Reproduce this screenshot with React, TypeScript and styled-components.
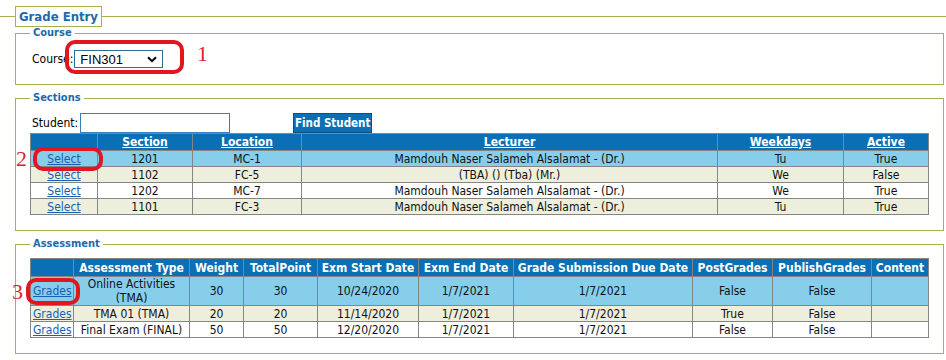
import styled, { createGlobalStyle } from 'styled-components'

const FONT = `"DejaVu Sans Condensed", "DejaVu Sans", Verdana, sans-serif`

const GlobalStyle = createGlobalStyle`
  html, body {
    margin: 0;
    padding: 0;
    background: #ffffff;
  }
  body {
    font-family: ${FONT};
    font-size: 12px;
    color: #000000;
  }
`

const Page = styled.div`
  position: relative;
  width: 946px;
  height: 360px;
  overflow: hidden;
  padding-top: 6px;
  box-sizing: border-box;
`

const OuterSet = styled.fieldset`
  margin: 0;
  padding: 0 2px 0 15px;
  border: none;
  border-top: 1px solid #aab050;
  min-width: 0;
`

const OuterLegend = styled.legend`
  margin: 0;
  padding: 0 3px;
  border: 1px solid #aab050;
  line-height: 19px;
  font-size: 13px;
  font-weight: bold;
  color: #1c6aac;
`

const Group = styled.fieldset<{ $top: number; $bottom: number }>`
  margin: 0;
  & + & {
    margin-top: 7px;
  }
  padding: ${(p) => p.$top}px 14px ${(p) => p.$bottom}px 14px;
  border: 1px solid #aab050;
  min-width: 0;
`

const GroupLegend = styled.legend`
  margin: 0;
  padding: 0 3px;
  line-height: 12px;
  font-size: 11px;
  font-weight: bold;
  color: #1c6aac;
`

const FormRow = styled.div`
  display: flex;
  align-items: center;
  height: 20px;
`

const Label = styled.label`
  padding-left: 2px;
  font-size: 12px;
`

const SelectWrap = styled.span`
  position: relative;
  display: inline-block;
  margin-left: 1px;
`

const Select = styled.select`
  appearance: none;
  width: 89px;
  height: 18px;
  margin: 0;
  padding: 0 0 0 5px;
  border: 1px solid #2a6d96;
  border-radius: 0;
  background: #ffffff;
  font-family: "Liberation Sans", Arial, sans-serif;
  font-size: 13px;
  color: #000000;
`

const Chevron = styled.svg`
  position: absolute;
  right: 6px;
  top: 6px;
  pointer-events: none;
`

const TextInput = styled.input`
  width: 150px;
  height: 20px;
  margin: 0 0 0 2px;
  padding: 0 3px;
  box-sizing: border-box;
  border: 1px solid #3a7fbf;
  font-family: ${FONT};
  font-size: 12px;
`

const FindButton = styled.button`
  margin-left: 63px;
  width: 79px;
  height: 20px;
  padding: 0;
  box-sizing: border-box;
  border: 1px solid #134f7c;
  background: #0a6fb5;
  color: #ffffff;
  font-family: ${FONT};
  font-size: 11.5px;
  font-weight: bold;
  white-space: nowrap;
  overflow: hidden;
`

const Grid = styled.table`
  width: 898px;
  table-layout: fixed;
  border-collapse: collapse;
  border: 1px solid #858585;
`

const Head = styled.th<{ $h: number }>`
  height: ${(p) => p.$h}px;
  padding: 0 2px;
  border: 1px solid #858585;
  background: #0a6fb5;
  color: #ffffff;
  font-weight: bold;
  font-size: 12px;
  text-align: center;
  white-space: nowrap;
`

const HeadLink = styled.a`
  color: #ffffff;
  text-decoration: underline;
`

const Row = styled.tr<{ $tone: 'sel' | 'alt' | 'plain' }>`
  background: ${(p) =>
    p.$tone === 'sel' ? '#87ceeb' : p.$tone === 'alt' ? '#eeeedd' : '#ffffff'};
`

const Cell = styled.td<{ $h?: number }>`
  height: ${(p) => p.$h ?? 15}px;
  padding: 0 2px;
  border: 1px solid #858585;
  text-align: center;
  line-height: 14px;
  font-size: 12px;
  color: #111111;
`

const CellLink = styled.a`
  color: #1a5fb0;
  text-decoration: underline;
`

const Mark = styled.div<{ $x: number; $y: number; $w: number; $h: number }>`
  position: absolute;
  left: ${(p) => p.$x}px;
  top: ${(p) => p.$y}px;
  width: ${(p) => p.$w}px;
  height: ${(p) => p.$h}px;
  box-sizing: border-box;
  border: 4px solid #e3151f;
  border-radius: 10px;
  pointer-events: none;
`

const Numeral = styled.span<{ $x: number; $y: number }>`
  position: absolute;
  left: ${(p) => p.$x}px;
  top: ${(p) => p.$y}px;
  font-family: "Liberation Serif", "Times New Roman", serif;
  font-size: 22px;
  line-height: 22px;
  color: #d91f2b;
`

const sections = [
  { section: '1201', location: 'MC-1', lecturer: 'Mamdouh Naser Salameh Alsalamat - (Dr.)', days: 'Tu', active: 'True' },
  { section: '1102', location: 'FC-5', lecturer: '(TBA) () (Tba) (Mr.)', days: 'We', active: 'False' },
  { section: '1202', location: 'MC-7', lecturer: 'Mamdouh Naser Salameh Alsalamat - (Dr.)', days: 'We', active: 'True' },
  { section: '1101', location: 'FC-3', lecturer: 'Mamdouh Naser Salameh Alsalamat - (Dr.)', days: 'Tu', active: 'True' },
]

const assessments = [
  { type: 'Online Activities (TMA)', weight: 30, total: 30, start: '10/24/2020', end: '1/7/2021', due: '1/7/2021', post: 'False', publish: 'False' },
  { type: 'TMA 01 (TMA)', weight: 20, total: 20, start: '11/14/2020', end: '1/7/2021', due: '1/7/2021', post: 'True', publish: 'False' },
  { type: 'Final Exam (FINAL)', weight: 50, total: 50, start: '12/20/2020', end: '1/7/2021', due: '1/7/2021', post: 'False', publish: 'False' },
]

const sectionCols = [67, 95, 109, 416, 126, 85]
const assessCols = [43, 116, 54, 74, 101, 95, 179, 80, 99, 57]
const tones: Array<'sel' | 'alt' | 'plain'> = ['sel', 'alt', 'plain', 'alt']

const App = () => {
  return (
    <Page>
      <GlobalStyle />
      <OuterSet>
        <OuterLegend>Grade Entry</OuterLegend>

        <Group $top={10} $bottom={15}>
          <GroupLegend>Course</GroupLegend>
          <FormRow>
            <Label>Course:</Label>
            <SelectWrap>
              <Select defaultValue="FIN301">
                <option>FIN301</option>
              </Select>
              <Chevron width="10" height="7" viewBox="0 0 10 7">
                <path d="M1 1.2 L5 5.2 L9 1.2" fill="none" stroke="#000" strokeWidth="2" />
              </Chevron>
            </SelectWrap>
          </FormRow>
        </Group>

        <Group $top={9} $bottom={15}>
          <GroupLegend>Sections</GroupLegend>
          <FormRow>
            <Label>Student:</Label>
            <TextInput type="text" />
            <FindButton type="button">Find Student</FindButton>
          </FormRow>
          <Grid>
            <colgroup>
              {sectionCols.map((w, i) => (
                <col key={i} style={{ width: w }} />
              ))}
            </colgroup>
            <thead>
              <tr>
                <Head $h={16}>&nbsp;</Head>
                <Head $h={16}><HeadLink>Section</HeadLink></Head>
                <Head $h={16}><HeadLink>Location</HeadLink></Head>
                <Head $h={16}><HeadLink>Lecturer</HeadLink></Head>
                <Head $h={16}><HeadLink>Weekdays</HeadLink></Head>
                <Head $h={16}><HeadLink>Active</HeadLink></Head>
              </tr>
            </thead>
            <tbody>
              {sections.map((s, i) => (
                <Row key={s.section} $tone={tones[i]}>
                  <Cell><CellLink>Select</CellLink></Cell>
                  <Cell>{s.section}</Cell>
                  <Cell>{s.location}</Cell>
                  <Cell>{s.lecturer}</Cell>
                  <Cell>{s.days}</Cell>
                  <Cell>{s.active}</Cell>
                </Row>
              ))}
            </tbody>
          </Grid>
        </Group>

        <Group $top={8} $bottom={15}>
          <GroupLegend>Assessment</GroupLegend>
          <Grid>
            <colgroup>
              {assessCols.map((w, i) => (
                <col key={i} style={{ width: w }} />
              ))}
            </colgroup>
            <thead>
              <tr>
                <Head $h={17}>&nbsp;</Head>
                <Head $h={17}>Assessment Type</Head>
                <Head $h={17}>Weight</Head>
                <Head $h={17}>TotalPoint</Head>
                <Head $h={17}>Exm Start Date</Head>
                <Head $h={17}>Exm End Date</Head>
                <Head $h={17}>Grade Submission Due Date</Head>
                <Head $h={17}>PostGrades</Head>
                <Head $h={17}>PublishGrades</Head>
                <Head $h={17}>Content</Head>
              </tr>
            </thead>
            <tbody>
              {assessments.map((a, i) => (
                <Row key={a.type} $tone={tones[i]}>
                  <Cell $h={i === 0 ? 28 : 15}><CellLink>Grades</CellLink></Cell>
                  <Cell>{a.type}</Cell>
                  <Cell>{a.weight}</Cell>
                  <Cell>{a.total}</Cell>
                  <Cell>{a.start}</Cell>
                  <Cell>{a.end}</Cell>
                  <Cell>{a.due}</Cell>
                  <Cell>{a.post}</Cell>
                  <Cell>{a.publish}</Cell>
                  <Cell></Cell>
                </Row>
              ))}
            </tbody>
          </Grid>
        </Group>
      </OuterSet>

      <Mark $x={65} $y={40} $w={119} $h={34} />
      <Numeral $x={197} $y={43}>1</Numeral>
      <Mark $x={33} $y={147} $w={70} $h={24} />
      <Numeral $x={16} $y={148}>2</Numeral>
      <Mark $x={26} $y={278} $w={54} $h={27} />
      <Numeral $x={12} $y={281}>3</Numeral>
    </Page>
  )
}

export default App
